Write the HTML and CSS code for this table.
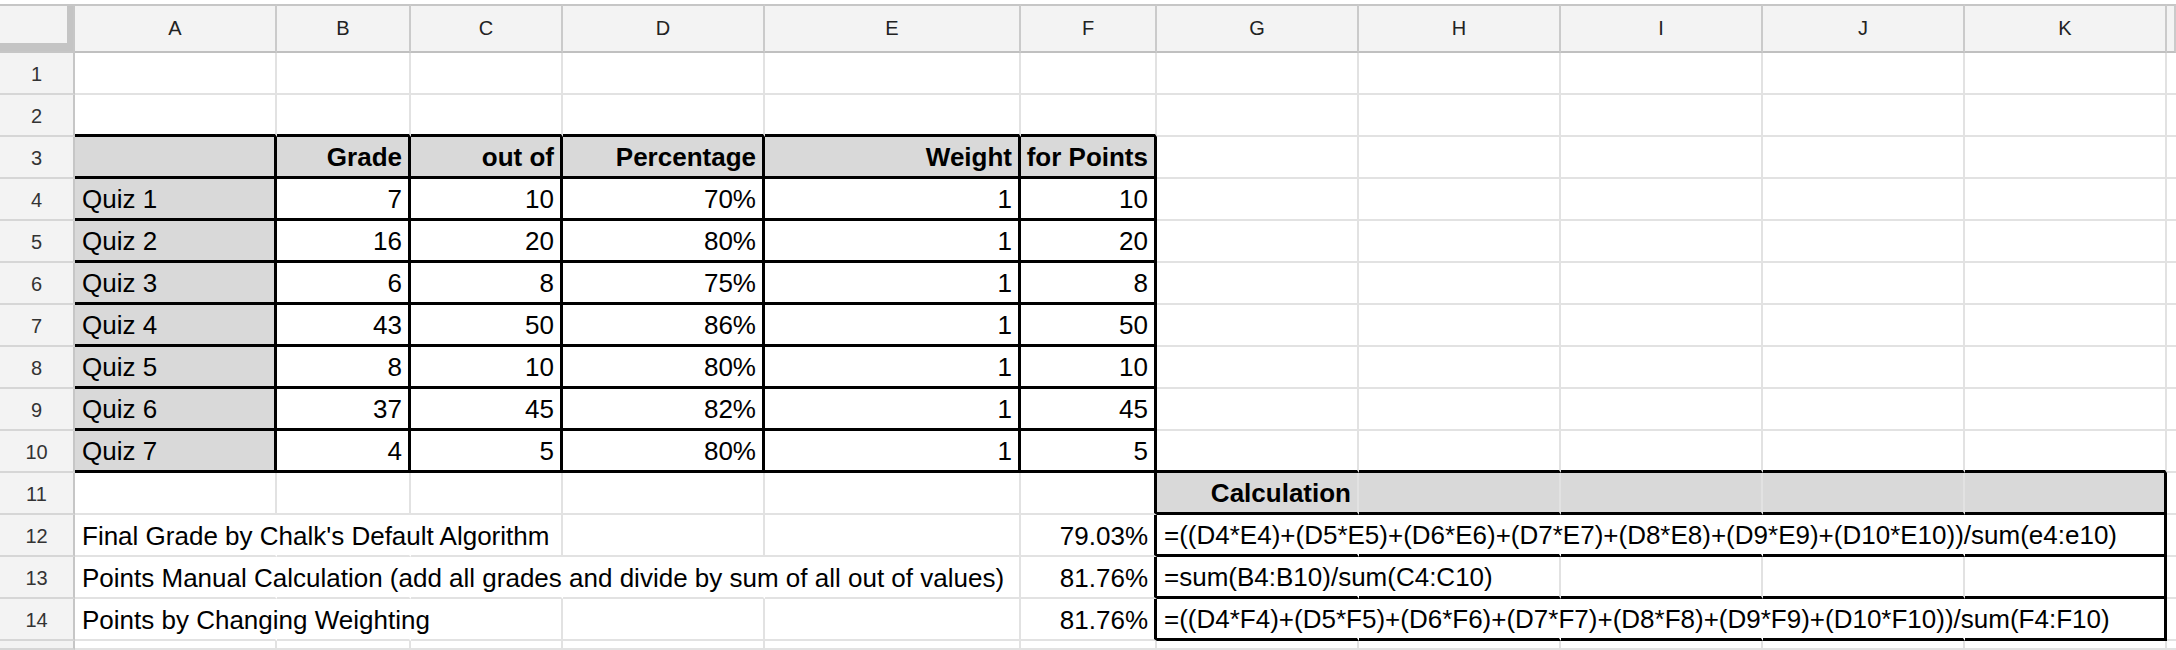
FILE: index.html
```html
<!DOCTYPE html>
<html>
<head>
<meta charset="utf-8">
<link rel="stylesheet" href="styles.css">
</head>
<body>
<div class="sheet">
  <div class="corner"></div><div class="ch">A</div><div class="ch">B</div><div class="ch">C</div><div class="ch">D</div><div class="ch">E</div><div class="ch">F</div><div class="ch">G</div><div class="ch">H</div><div class="ch">I</div><div class="ch">J</div><div class="ch">K</div><div class="ch ex"></div>

  <div class="rh">1</div><div class="c"></div><div class="c"></div><div class="c"></div><div class="c"></div><div class="c"></div><div class="c"></div><div class="c"></div><div class="c"></div><div class="c"></div><div class="c"></div><div class="c"></div><div class="c"></div>

  <div class="rh">2</div><div class="c kb"></div><div class="c kb"></div><div class="c kb"></div><div class="c kb"></div><div class="c kb"></div><div class="c kb"></div><div class="c"></div><div class="c"></div><div class="c"></div><div class="c"></div><div class="c"></div><div class="c"></div>

  <div class="rh">3</div><div class="c g kr kb"></div><div class="c g kr kb bd r">Grade</div><div class="c g kr kb bd r">out of</div><div class="c g kr kb bd r">Percentage</div><div class="c g kr kb bd r">Weight</div><div class="c g kr kb bd r">for Points</div><div class="c"></div><div class="c"></div><div class="c"></div><div class="c"></div><div class="c"></div><div class="c"></div>

  <div class="rh">4</div><div class="c g kr kb">Quiz 1</div><div class="c kr kb r">7</div><div class="c kr kb r">10</div><div class="c kr kb r">70%</div><div class="c kr kb r">1</div><div class="c kr kb r">10</div><div class="c"></div><div class="c"></div><div class="c"></div><div class="c"></div><div class="c"></div><div class="c"></div>

  <div class="rh">5</div><div class="c g kr kb">Quiz 2</div><div class="c kr kb r">16</div><div class="c kr kb r">20</div><div class="c kr kb r">80%</div><div class="c kr kb r">1</div><div class="c kr kb r">20</div><div class="c"></div><div class="c"></div><div class="c"></div><div class="c"></div><div class="c"></div><div class="c"></div>

  <div class="rh">6</div><div class="c g kr kb">Quiz 3</div><div class="c kr kb r">6</div><div class="c kr kb r">8</div><div class="c kr kb r">75%</div><div class="c kr kb r">1</div><div class="c kr kb r">8</div><div class="c"></div><div class="c"></div><div class="c"></div><div class="c"></div><div class="c"></div><div class="c"></div>

  <div class="rh">7</div><div class="c g kr kb">Quiz 4</div><div class="c kr kb r">43</div><div class="c kr kb r">50</div><div class="c kr kb r">86%</div><div class="c kr kb r">1</div><div class="c kr kb r">50</div><div class="c"></div><div class="c"></div><div class="c"></div><div class="c"></div><div class="c"></div><div class="c"></div>

  <div class="rh">8</div><div class="c g kr kb">Quiz 5</div><div class="c kr kb r">8</div><div class="c kr kb r">10</div><div class="c kr kb r">80%</div><div class="c kr kb r">1</div><div class="c kr kb r">10</div><div class="c"></div><div class="c"></div><div class="c"></div><div class="c"></div><div class="c"></div><div class="c"></div>

  <div class="rh">9</div><div class="c g kr kb">Quiz 6</div><div class="c kr kb r">37</div><div class="c kr kb r">45</div><div class="c kr kb r">82%</div><div class="c kr kb r">1</div><div class="c kr kb r">45</div><div class="c"></div><div class="c"></div><div class="c"></div><div class="c"></div><div class="c"></div><div class="c"></div>

  <div class="rh">10</div><div class="c g kr kb">Quiz 7</div><div class="c kr kb r">4</div><div class="c kr kb r">5</div><div class="c kr kb r">80%</div><div class="c kr kb r">1</div><div class="c kr kb r">5</div><div class="c kb"></div><div class="c kb"></div><div class="c kb"></div><div class="c kb"></div><div class="c kb"></div><div class="c"></div>

  <div class="rh">11</div><div class="c"></div><div class="c"></div><div class="c"></div><div class="c"></div><div class="c"></div><div class="c kr"></div><div class="c g kb bd r">Calculation</div><div class="c g kb"></div><div class="c g kb"></div><div class="c g kb"></div><div class="c g kb kr"></div><div class="c"></div>

  <div class="rh">12</div><div class="c nr ov">Final Grade by Chalk's Default Algorithm</div><div class="c nr"></div><div class="c"></div><div class="c"></div><div class="c"></div><div class="c kr r">79.03%</div><div class="c kb nr ov">=((D4*E4)+(D5*E5)+(D6*E6)+(D7*E7)+(D8*E8)+(D9*E9)+(D10*E10))/sum(e4:e10)</div><div class="c kb nr"></div><div class="c kb nr"></div><div class="c kb nr"></div><div class="c kb kr"></div><div class="c"></div>

  <div class="rh">13</div><div class="c nr ov">Points Manual Calculation (add all grades and divide by sum of all out of values)</div><div class="c nr"></div><div class="c nr"></div><div class="c nr"></div><div class="c"></div><div class="c kr r">81.76%</div><div class="c kb nr ov">=sum(B4:B10)/sum(C4:C10)</div><div class="c kb"></div><div class="c kb"></div><div class="c kb"></div><div class="c kb kr"></div><div class="c"></div>

  <div class="rh">14</div><div class="c nr ov">Points by Changing Weighting</div><div class="c nr"></div><div class="c"></div><div class="c"></div><div class="c"></div><div class="c kr r">81.76%</div><div class="c kb nr ov">=((D4*F4)+(D5*F5)+(D6*F6)+(D7*F7)+(D8*F8)+(D9*F9)+(D10*F10))/sum(F4:F10)</div><div class="c kb nr"></div><div class="c kb nr"></div><div class="c kb nr"></div><div class="c kb kr"></div><div class="c"></div>

  <div class="rh"></div><div class="c"></div><div class="c"></div><div class="c"></div><div class="c"></div><div class="c"></div><div class="c"></div><div class="c"></div><div class="c"></div><div class="c"></div><div class="c"></div><div class="c"></div><div class="c"></div>
</div>
</body>
</html>
```
FILE: styles.css
```css
html, body {
  margin: 0;
  padding: 0;
  background: #ffffff;
}
body {
  width: 2176px;
  height: 650px;
  overflow: hidden;
  font-family: "Liberation Sans", Arial, sans-serif;
}
.sheet {
  margin-top: 4px;
  display: grid;
  grid-template-columns: 75px 202px 134px 152px 202px 256px 136px 202px 202px 202px 202px 202px 9px;
  grid-template-rows: 49px repeat(14, 42px) 9px;
}
.corner {
  background: #f3f3f3;
  border-top: 2px solid #c6c6c6;
  box-sizing: border-box;
  box-shadow: inset -6px -8px 0 #c4c4c4;
  border-right: 2px solid #c6c6c6;
  border-bottom: 2px solid #c6c6c6;
}
.ch {
  background: #f3f3f3;
  border-top: 2px solid #c6c6c6;
  border-right: 2px solid #cacaca;
  border-bottom: 2px solid #c0c0c0;
  box-sizing: border-box;
  display: flex;
  align-items: center;
  justify-content: center;
  font-size: 20px;
  color: #222;
}
.rh {
  background: #f3f3f3;
  border-right: 2px solid #c6c6c6;
  border-bottom: 2px solid #d6d6d6;
  box-sizing: border-box;
  display: flex;
  align-items: center;
  justify-content: center;
  font-size: 20px;
  color: #333;
  padding-top: 2px;
}
.c {
  border-right: 2px solid #e2e2e2;
  border-bottom: 2px solid #e2e2e2;
  box-sizing: border-box;
  display: flex;
  align-items: flex-end;
  padding: 0 6px 3px 7px;
  font-size: 26px;
  color: #000;
  white-space: nowrap;
  overflow: hidden;
  min-width: 0;
}
.g { background: #d9d9d9; }
.bd { font-weight: bold; }
.r { justify-content: flex-end; }
.kr { border-right: 3px solid #000; }
.kb { border-bottom: 3px solid #000; }
.nr { border-right-color: transparent; }
.ov { overflow: visible; z-index: 1; }
```
